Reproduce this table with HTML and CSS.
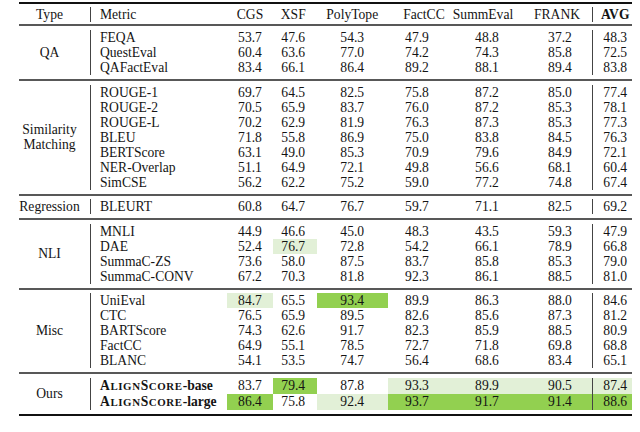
FILE: index.html
```html
<!DOCTYPE html>
<html>
<head>
<meta charset="utf-8">
<link rel="stylesheet" href="styles.css">
</head>
<body>
<table class="t">
<colgroup><col class="w-type"><col class="w-metric"><col class="w-cgs"><col class="w-xsf"><col class="w-poly"><col class="w-fcc"><col class="w-summ"><col class="w-frank"><col class="w-avg"></colgroup>
<tbody>
<tr class="rl first"><td colspan="9"><div class="heavy"></div></td></tr>
<tr class="r h"><th class="ty">Type</th><th class="m">Metric</th><th>CGS</th><th>XSF</th><th>PolyTope</th><th>FactCC</th><th>SummEval</th><th>FRANK</th><th class="b">AVG</th></tr>
<tr class="rl hd"><td colspan="9"><div class="mid"></div></td></tr>

<tr class="r"><td class="ty" rowspan="3">QA</td><td class="m">FEQA</td><td>53.7</td><td>47.6</td><td>54.3</td><td>47.9</td><td>48.8</td><td>37.2</td><td>48.3</td></tr>
<tr class="r"><td class="m">QuestEval</td><td>60.4</td><td>63.6</td><td>77.0</td><td>74.2</td><td>74.3</td><td>85.8</td><td>72.5</td></tr>
<tr class="r"><td class="m">QAFactEval</td><td>83.4</td><td>66.1</td><td>86.4</td><td>89.2</td><td>88.1</td><td>89.4</td><td>83.8</td></tr>
<tr class="rl"><td colspan="9"><div class="mid"></div></td></tr>

<tr class="r"><td class="ty" rowspan="7">Similarity<br>Matching</td><td class="m">ROUGE-1</td><td>69.7</td><td>64.5</td><td>82.5</td><td>75.8</td><td>87.2</td><td>85.0</td><td>77.4</td></tr>
<tr class="r"><td class="m">ROUGE-2</td><td>70.5</td><td>65.9</td><td>83.7</td><td>76.0</td><td>87.2</td><td>85.3</td><td>78.1</td></tr>
<tr class="r"><td class="m">ROUGE-L</td><td>70.2</td><td>62.9</td><td>81.9</td><td>76.3</td><td>87.3</td><td>85.3</td><td>77.3</td></tr>
<tr class="r"><td class="m">BLEU</td><td>71.8</td><td>55.8</td><td>86.9</td><td>75.0</td><td>83.8</td><td>84.5</td><td>76.3</td></tr>
<tr class="r"><td class="m">BERTScore</td><td>63.1</td><td>49.0</td><td>85.3</td><td>70.9</td><td>79.6</td><td>84.9</td><td>72.1</td></tr>
<tr class="r"><td class="m">NER-Overlap</td><td>51.1</td><td>64.9</td><td>72.1</td><td>49.8</td><td>56.6</td><td>68.1</td><td>60.4</td></tr>
<tr class="r"><td class="m">SimCSE</td><td>56.2</td><td>62.2</td><td>75.2</td><td>59.0</td><td>77.2</td><td>74.8</td><td>67.4</td></tr>
<tr class="rl"><td colspan="9"><div class="mid"></div></td></tr>

<tr class="r"><td class="ty">Regression</td><td class="m">BLEURT</td><td>60.8</td><td>64.7</td><td>76.7</td><td>59.7</td><td>71.1</td><td>82.5</td><td>69.2</td></tr>
<tr class="rl"><td colspan="9"><div class="mid"></div></td></tr>

<tr class="r"><td class="ty" rowspan="4">NLI</td><td class="m">MNLI</td><td>44.9</td><td>46.6</td><td>45.0</td><td>48.3</td><td>43.5</td><td>59.3</td><td>47.9</td></tr>
<tr class="r"><td class="m">DAE</td><td>52.4</td><td class="lg">76.7</td><td>72.8</td><td>54.2</td><td>66.1</td><td>78.9</td><td>66.8</td></tr>
<tr class="r"><td class="m">SummaC-ZS</td><td>73.6</td><td>58.0</td><td>87.5</td><td>83.7</td><td>85.8</td><td>85.3</td><td>79.0</td></tr>
<tr class="r"><td class="m">SummaC-CONV</td><td>67.2</td><td>70.3</td><td>81.8</td><td>92.3</td><td>86.1</td><td>88.5</td><td>81.0</td></tr>
<tr class="rl"><td colspan="9"><div class="mid"></div></td></tr>

<tr class="r"><td class="ty" rowspan="5">Misc</td><td class="m">UniEval</td><td class="lg">84.7</td><td>65.5</td><td class="dg">93.4</td><td>89.9</td><td>86.3</td><td>88.0</td><td>84.6</td></tr>
<tr class="r"><td class="m">CTC</td><td>76.5</td><td>65.9</td><td>89.5</td><td>82.6</td><td>85.6</td><td>87.3</td><td>81.2</td></tr>
<tr class="r"><td class="m">BARTScore</td><td>74.3</td><td>62.6</td><td>91.7</td><td>82.3</td><td>85.9</td><td>88.5</td><td>80.9</td></tr>
<tr class="r"><td class="m">FactCC</td><td>64.9</td><td>55.1</td><td>78.5</td><td>72.7</td><td>71.8</td><td>69.8</td><td>68.8</td></tr>
<tr class="r"><td class="m">BLANC</td><td>54.1</td><td>53.5</td><td>74.7</td><td>56.4</td><td>68.6</td><td>83.4</td><td>65.1</td></tr>
<tr class="rl"><td colspan="9"><div class="mid"></div></td></tr>

<tr class="r"><td class="ty" rowspan="2">Ours</td><td class="m al"><span class="sc">A<span class="s">lign</span>S<span class="s">core</span></span>-base</td><td>83.7</td><td class="dg">79.4</td><td>87.8</td><td class="lg">93.3</td><td class="lg">89.9</td><td class="lg">90.5</td><td class="lg">87.4</td></tr>
<tr class="r"><td class="m al"><span class="sc">A<span class="s">lign</span>S<span class="s">core</span></span>-large</td><td class="dg">86.4</td><td>75.8</td><td class="lg">92.4</td><td class="dg">93.7</td><td class="dg">91.7</td><td class="dg">91.4</td><td class="dg">88.6</td></tr>
<tr class="rl last"><td colspan="9"><div class="heavy"></div></td></tr>
</tbody>
</table>
</body>
</html>
```

FILE: styles.css
```css
html, body {
  margin: 0;
  padding: 0;
  background: #ffffff;
}

.t {
  margin: 2px 0 0 19px;
  width: 612.5px;
  table-layout: fixed;
  border-collapse: separate;
  border-spacing: 0;
  font-family: "Liberation Serif", "Times New Roman", serif;
  font-size: 13.6px;
  line-height: 15px;
  color: #141414;
  text-align: center;
}

.w-type { width: 72px; }
.w-metric { width: 136px; }
.w-cgs { width: 46px; }
.w-xsf { width: 43.5px; }
.w-poly { width: 71.5px; }
.w-fcc { width: 58px; }
.w-summ { width: 82px; }
.w-frank { width: 64px; }
.w-avg { width: 39.5px; }

.t td, .t th {
  box-sizing: border-box;
  padding: 0;
  height: 15px;
  line-height: 15px;
  font-weight: normal;
  white-space: nowrap;
  vertical-align: middle;
}

.t th.b { font-weight: bold; }

/* rules */
.t .rl td {
  height: auto;
  line-height: 0;
  font-size: 0;
  padding: 4px 0 3.5px;
}
.t .rl.first td { padding: 0 0 2.5px; }
.t .rl.hd td { padding: 2.5px 0 4px; }
.t .rl.last td { padding: 4px 0 0; }

.heavy { height: 2px; background: #111111; }
.mid { height: 2px; background: #585858; }

/* type column */
.t .ty {
  padding-right: 10px;
  border-right: 1px solid #444444;
  text-align: center;
}

/* metric column */
.t .m {
  text-align: left;
  padding-left: 9px;
}
.t .al { font-weight: bold; }
.sc { letter-spacing: 0.6px; }
.sc .s { text-transform: uppercase; font-size: 0.8em; }

/* numeric columns */
.t .r > :nth-last-child(6) { padding-right: 3px; }
.t .r > :nth-last-child(1) {
  padding-left: 6px;
  border-left: 1px solid #444444;
}
.t .h > :nth-last-child(4) { padding-left: 14px; }
.t .h > :nth-last-child(3) { padding-right: 8px; }
.t .h > :nth-last-child(2) { padding-right: 6px; }

.t .lg { background: #e2f0d7; }
.t .dg { background: #92d050; }
```
